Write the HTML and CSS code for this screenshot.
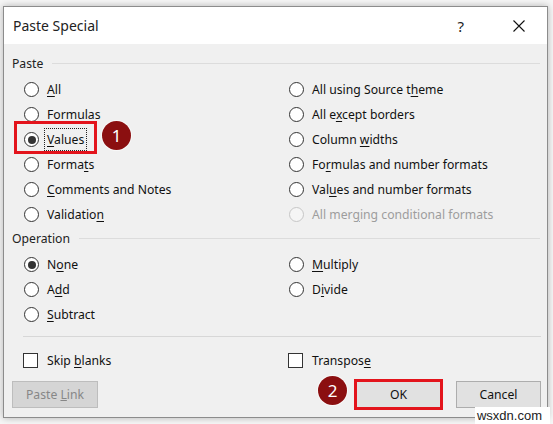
FILE: index.html
```html
<!DOCTYPE html>
<html lang="en">
<head>
  <meta charset="UTF-8" />
  <meta name="viewport" content="width=device-width, initial-scale=1" />
  <link rel="stylesheet" href="styles.css">
</head>
<body>
  <div class="dialog">
    <div class="titlebar">
      <span class="title">Paste Special</span>
      <span class="help">?</span>
      <span class="close">
        <svg width="12" height="12" viewBox="0 0 12 12">
          <path d="M0.5 0.5 L11.5 11.5 M11.5 0.5 L0.5 11.5" stroke="#111" stroke-width="1.1" fill="none"/>
        </svg>
      </span>
    </div>

    <div class="content">
      <div class="group-head"><span>Paste</span><i class="rule"></i></div>
      <div class="options">
        <div class="opt"><span class="radio"></span><span><u>A</u>ll</span></div>
        <div class="opt"><span class="radio"></span><span>All using Source t<u>h</u>eme</span></div>
        <div class="opt"><span class="radio"></span><span>Formulas</span></div>
        <div class="opt"><span class="radio"></span><span>All e<u>x</u>cept borders</span></div>
        <div class="opt"><span class="radio on"></span><span class="focus"><u>V</u>alues</span></div>
        <div class="opt"><span class="radio"></span><span>Column <u>w</u>idths</span></div>
        <div class="opt"><span class="radio"></span><span>Forma<u>t</u>s</span></div>
        <div class="opt"><span class="radio"></span><span>Fo<u>r</u>mulas and number formats</span></div>
        <div class="opt"><span class="radio"></span><span><u>C</u>omments and Notes</span></div>
        <div class="opt"><span class="radio"></span><span>Val<u>u</u>es and number formats</span></div>
        <div class="opt"><span class="radio"></span><span>Validatio<u>n</u></span></div>
        <div class="opt off"><span class="radio"></span><span>All mer<u>g</u>ing conditional formats</span></div>
      </div>

      <div class="group-head"><span>Operation</span><i class="rule"></i></div>
      <div class="options ops">
        <div class="opt"><span class="radio on"></span><span>N<u>o</u>ne</span></div>
        <div class="opt"><span class="radio"></span><span><u>M</u>ultiply</span></div>
        <div class="opt"><span class="radio"></span><span>A<u>d</u>d</span></div>
        <div class="opt"><span class="radio"></span><span>D<u>i</u>vide</span></div>
        <div class="opt"><span class="radio"></span><span><u>S</u>ubtract</span></div>
        <div></div>
      </div>

      <div class="sep"></div>

      <div class="checks">
        <div class="opt"><span class="box"></span><span>Skip <u>b</u>lanks</span></div>
        <div class="opt"><span class="box"></span><span>Transpos<u>e</u></span></div>
      </div>

      <div class="buttons">
        <button class="btn disabled">Paste <u>L</u>ink</button>
        <button class="btn ok">OK</button>
        <button class="btn cancel">Cancel</button>
      </div>
    </div>

    <!-- callouts drawn on top of the dialog -->
    <div class="mark mark-values"></div>
    <div class="badge badge-1">1</div>
    <div class="badge badge-2">2</div>
  </div>

  <div class="watermark">wsxdn.com</div>
</body>
</html>
```

FILE: styles.css
```css
html, body {
  margin: 0;
  padding: 0;
}
body {
  height: 424px;
  overflow: hidden;
  background: #f6f6f6;
  font-family: "Noto Sans", "Open Sans", sans-serif;
  font-size: 12.2px;
  color: #111;
}

.dialog {
  position: relative;
  width: 545px;
  margin: 6px 0 0 3px;
  border: 1px solid #8c8c8c;
  box-sizing: border-box;
  background: #f0f0f0;
  box-shadow: 0 0 7px rgba(0,0,0,0.28);
}

.titlebar {
  height: 37px;
  background: #fff;
  display: flex;
  align-items: center;
  padding: 0 22px 0 9px;
}
.title {
  font-size: 14px;
  color: #222;
}
.help {
  margin-left: auto;
  margin-right: 49px;
  font-size: 15px;
  color: #222;
}
.close svg { display: block; }

.content {
  padding: 10px 6px 9px 8px;
}

.group-head {
  display: flex;
  align-items: center;
  gap: 9px;
  height: 18px;
  color: #222;
}
.group-head .rule {
  flex: 1;
  border-top: 1px solid #dcdcdc;
  margin-right: 1px;
}

.options {
  display: grid;
  grid-template-columns: 265px 1fr;
  grid-auto-rows: 25px;
  padding-left: 12px;
  margin: 5px 0 2px;
}
.options.ops { margin-bottom: 9px; }

.opt {
  display: flex;
  align-items: center;
  gap: 8px;
  white-space: nowrap;
}
.opt u { text-underline-offset: 2px; }

.radio {
  width: 15px;
  height: 15px;
  box-sizing: border-box;
  border: 1px solid #333;
  border-radius: 50%;
  background: #fff;
  display: flex;
  align-items: center;
  justify-content: center;
  flex-shrink: 0;
}
.radio.on::after {
  content: "";
  width: 8px;
  height: 8px;
  border-radius: 50%;
  background: #333;
}
.opt.off { color: #9d9d9d; }
.opt.off .radio {
  border-color: #c6c6c6;
  background: #f5f5f5;
}

.focus {
  outline: 1px dotted #222;
  outline-offset: 2px;
}

.sep {
  height: 1px;
  background: #d7d7d7;
  margin-left: 11px;
}

.checks {
  display: grid;
  grid-template-columns: 265px 1fr;
  height: 20px;
  margin-top: 13px;
  padding-left: 11px;
}
.checks .opt { gap: 9px; }
.box {
  width: 15px;
  height: 15px;
  box-sizing: border-box;
  border: 1px solid #333;
  background: #fff;
  flex-shrink: 0;
}

.buttons {
  display: flex;
  margin-top: 11px;
}
.btn {
  width: 85px;
  height: 27px;
  padding: 0;
  border: 1px solid #adadad;
  background: #e1e1e1;
  font-family: "Noto Sans", "Open Sans", sans-serif;
  font-size: 12.2px;
  color: #111;
}
.btn.disabled {
  width: 86px;
  background: #d5d5d5;
  border-color: #bdbdbd;
  color: #878787;
}
.btn.ok {
  margin-left: auto;
  outline: 3px solid #e3141c;
  outline-offset: -1px;
}
.btn.cancel { margin-left: 15px; }

.mark {
  position: absolute;
  box-sizing: border-box;
  border: 3px solid #e3141c;
}
.mark-values {
  left: 10px;
  top: 114px;
  width: 83px;
  height: 33px;
}

.badge {
  position: absolute;
  width: 29px;
  height: 29px;
  border-radius: 50%;
  background: #8b0f10;
  color: #fff;
  font-size: 17px;
  line-height: 29px;
  text-align: center;
  box-shadow: 0 0 0 1px rgba(255,255,255,0.6);
}
.badge-1 { left: 98px; top: 114px; }
.badge-2 { left: 314px; top: 369px; }

.watermark {
  position: absolute;
  right: 3px;
  bottom: 0;
  background: #fff;
  padding: 0 8px 0 2px;
  font-family: "Liberation Sans", Arial, sans-serif;
  font-size: 13px;
  line-height: 17px;
  color: #222;
}
```
